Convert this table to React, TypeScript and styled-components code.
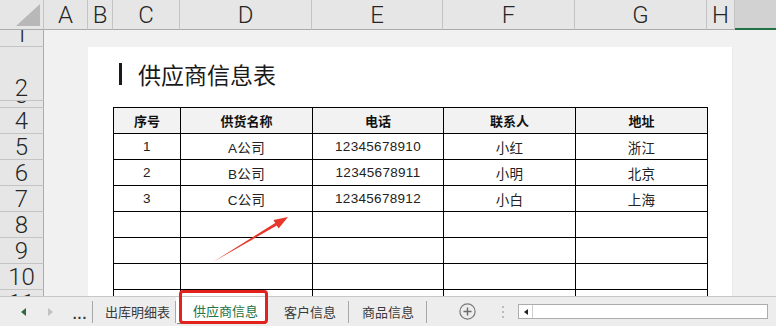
import React from 'react';
import styled, { createGlobalStyle } from 'styled-components';

const GlobalStyle = createGlobalStyle`
  html, body {
    margin: 0;
    padding: 0;
    background: #fff;
  }
  body {
    font-family: "Liberation Sans", "Noto Sans CJK SC", sans-serif;
  }
`;

const columns = [
  { label: 'A', width: 44 },
  { label: 'B', width: 25 },
  { label: 'C', width: 67 },
  { label: 'D', width: 132 },
  { label: 'E', width: 131 },
  { label: 'F', width: 132 },
  { label: 'G', width: 132 },
  { label: 'H', width: 28 },
];

const rows = [
  { label: '1', height: 17 },
  { label: '2', height: 54 },
  { label: '3', height: 7 },
  { label: '4', height: 26 },
  { label: '5', height: 26 },
  { label: '6', height: 26 },
  { label: '7', height: 26 },
  { label: '8', height: 26 },
  { label: '9', height: 26 },
  { label: '10', height: 26 },
  { label: '11', height: 26 },
];

const suppliers = [
  { no: '1', name: 'A公司', phone: '12345678910', contact: '小红', address: '浙江' },
  { no: '2', name: 'B公司', phone: '12345678911', contact: '小明', address: '北京' },
  { no: '3', name: 'C公司', phone: '12345678912', contact: '小白', address: '上海' },
];

const Window = styled.div`
  position: relative;
  width: 776px;
  height: 326px;
  overflow: hidden;
  display: flex;
  flex-direction: column;
  background: #f1f1f1;
`;

const ColumnHeaderRow = styled.div`
  display: flex;
  height: 30px;
  flex-shrink: 0;
`;

const Corner = styled.div`
  position: relative;
  width: 44px;
  box-sizing: border-box;
  background: #e6e6e6;
  border-right: 1px solid #c4c4c4;
  border-bottom: 1px solid #ababab;

  &::after {
    content: '';
    position: absolute;
    right: 3px;
    bottom: 3px;
    width: 24px;
    height: 22px;
    background: #b8b8b8;
    clip-path: polygon(100% 0, 100% 100%, 0 100%);
  }
`;

const HeaderLabel = styled.div<{ $width: number }>`
  width: ${(p) => p.$width}px;
  flex-shrink: 0;
  box-sizing: border-box;
  background: #e6e6e6;
  border-right: 1px solid #c4c4c4;
  border-bottom: 1px solid #ababab;
  font-family: Roboto, "Liberation Sans", sans-serif;
  font-weight: 300;
  font-size: 24px;
  line-height: 30px;
  color: #262626;
  text-align: center;
  overflow: hidden;
`;

const SelectedFiller = styled.div`
  flex: 1;
  background: #d2d2d2;
  border-bottom: 2px solid #217346;
  box-sizing: border-box;
`;

const Body = styled.div`
  flex: 1;
  display: flex;
  min-height: 0;
`;

const RowHeaderColumn = styled.div`
  width: 44px;
  flex-shrink: 0;
  display: flex;
  flex-direction: column;
  overflow: hidden;
`;

const RowLabel = styled.div<{ $height: number }>`
  height: ${(p) => p.$height}px;
  flex-shrink: 0;
  box-sizing: border-box;
  display: flex;
  align-items: flex-end;
  justify-content: center;
  padding-bottom: 1px;
  overflow: hidden;
  background: #e6e6e6;
  border-right: 1px solid #ababab;
  border-bottom: 1px solid #c4c4c4;
  font-family: Roboto, "Liberation Sans", sans-serif;
  font-weight: 300;
  font-size: 24px;
  line-height: 22px;
  color: #262626;
`;

const SheetArea = styled.div`
  flex: 1;
  display: flex;
  padding: 17px 0 0 44px;
  background: #f1f1f1;
  overflow: hidden;
`;

const Page = styled.div`
  width: 645px;
  flex-shrink: 0;
  box-sizing: border-box;
  padding-left: 25px;
  background: #fff;
  border-right: 1px solid #e9e9e9;
  display: flex;
  flex-direction: column;
`;

const Title = styled.div`
  height: 60px;
  flex-shrink: 0;
  display: flex;
  align-items: center;
  padding-bottom: 7px;
  box-sizing: border-box;
  font-family: "Noto Sans CJK SC", sans-serif;
  font-size: 23px;
  color: #1a1a1a;
`;

const TitleBar = styled.span`
  width: 3px;
  height: 22px;
  margin: 0 16px 0 6px;
  background: #1a1a1a;
`;

const Table = styled.table`
  border-collapse: collapse;
  table-layout: fixed;
  width: 594px;
`;

const Cell = styled.td`
  height: 25px;
  padding: 0;
  border: 1px solid #000;
  text-align: center;
  font-family: "Liberation Sans", "Noto Sans CJK SC", sans-serif;
  font-size: 13.5px;
  letter-spacing: 0.3px;
  color: #222;
`;

const HeadCell = styled(Cell).attrs({ as: 'th' })`
  background: #f2f2f2;
  font-weight: bold;
  font-size: 13px;
  letter-spacing: 0;
  color: #111;
`;

const TabBar = styled.div`
  height: 30px;
  flex-shrink: 0;
  box-sizing: border-box;
  display: flex;
  align-items: center;
  background: #ededed;
  border-top: 1px solid #c6c6c6;
  padding-left: 14px;
`;

const NavArrow = styled.div<{ $active?: boolean }>`
  width: 18px;
  height: 18px;
  display: flex;
  align-items: center;
  justify-content: center;

  &::before {
    content: '';
    border-style: solid;
    border-width: 4px 5px 4px 0;
    border-color: transparent ${(p) => (p.$active ? '#2f6b45' : '#c2c2c2')} transparent transparent;
    transform: ${(p) => (p.$active ? 'none' : 'scaleX(-1)')};
  }

  & + & {
    margin-left: 9px;
  }
`;

const Ellipsis = styled.div`
  width: 24px;
  margin-left: 9px;
  text-align: center;
  font-size: 14px;
  font-weight: bold;
  letter-spacing: 1px;
  color: #333;
  padding-top: 4px;
`;

const Divider = styled.div`
  width: 1px;
  height: 22px;
  background: #a8a8a8;
  flex-shrink: 0;
`;

const SheetTab = styled.div<{ $active?: boolean; $pad: string }>`
  height: ${(p) => (p.$active ? '26px' : '22px')};
  align-self: ${(p) => (p.$active ? 'flex-start' : 'center')};
  display: flex;
  align-items: center;
  padding: ${(p) => p.$pad};
  font-family: "Noto Sans CJK SC", sans-serif;
  font-size: 13px;
  color: ${(p) => (p.$active ? '#217346' : '#3a3a3a')};
  background: ${(p) => (p.$active ? '#fff' : 'transparent')};
  box-shadow: ${(p) => (p.$active ? '1px 1px 0 #8a8a8a' : 'none')};
  white-space: nowrap;
`;

const AddButton = styled.svg`
  margin-left: 32px;
  flex-shrink: 0;
`;

const DragDots = styled.div`
  margin-left: 26px;
  display: flex;
  flex-direction: column;
  gap: 3px;

  span {
    width: 2px;
    height: 2px;
    background: #bdbdbd;
  }
`;

const ScrollTrack = styled.div`
  margin-left: 14px;
  width: 250px;
  height: 15px;
  box-sizing: border-box;
  display: flex;
  background: #fff;
  border: 1px solid #acacac;
`;

const ScrollButton = styled.div`
  width: 13px;
  display: flex;
  align-items: center;
  justify-content: center;
  border-right: 1px solid #cfcfcf;

  &::before {
    content: '';
    border-style: solid;
    border-width: 3.5px 4px 3.5px 0;
    border-color: transparent #222 transparent transparent;
  }
`;

const Highlight = styled.div`
  position: absolute;
  left: 179px;
  top: 290px;
  width: 89px;
  height: 34px;
  box-sizing: border-box;
  border: 3px solid #e2231d;
  border-radius: 4px;
  pointer-events: none;
`;

const Pointer = styled.svg`
  position: absolute;
  left: 0;
  top: 0;
  pointer-events: none;
`;

const App: React.FC = () => {
  const emptyRows = [0, 1, 2, 3];
  return (
    <Window>
      <GlobalStyle />
      <ColumnHeaderRow>
        <Corner />
        {columns.map((c) => (
          <HeaderLabel key={c.label} $width={c.width}>
            {c.label}
          </HeaderLabel>
        ))}
        <SelectedFiller />
      </ColumnHeaderRow>

      <Body>
        <RowHeaderColumn>
          {rows.map((r) => (
            <RowLabel key={r.label} $height={r.height}>
              {r.label}
            </RowLabel>
          ))}
        </RowHeaderColumn>

        <SheetArea>
          <Page>
            <Title>
              <TitleBar />
              供应商信息表
            </Title>
            <Table>
              <colgroup>
                <col style={{ width: 67 }} />
                <col style={{ width: 132 }} />
                <col style={{ width: 131 }} />
                <col style={{ width: 132 }} />
                <col style={{ width: 132 }} />
              </colgroup>
              <thead>
                <tr>
                  <HeadCell>序号</HeadCell>
                  <HeadCell>供货名称</HeadCell>
                  <HeadCell>电话</HeadCell>
                  <HeadCell>联系人</HeadCell>
                  <HeadCell>地址</HeadCell>
                </tr>
              </thead>
              <tbody>
                {suppliers.map((s) => (
                  <tr key={s.no}>
                    <Cell>{s.no}</Cell>
                    <Cell>{s.name}</Cell>
                    <Cell>{s.phone}</Cell>
                    <Cell>{s.contact}</Cell>
                    <Cell>{s.address}</Cell>
                  </tr>
                ))}
                {emptyRows.map((i) => (
                  <tr key={`empty-${i}`}>
                    <Cell />
                    <Cell />
                    <Cell />
                    <Cell />
                    <Cell />
                  </tr>
                ))}
              </tbody>
            </Table>
          </Page>
        </SheetArea>
      </Body>

      <TabBar>
        <NavArrow $active />
        <NavArrow />
        <Ellipsis>...</Ellipsis>
        <Divider />
        <SheetTab $pad="0 5px 0 12px">出库明细表</SheetTab>
        <Divider />
        <SheetTab $active $pad="0 7px 0 17px">供应商信息</SheetTab>
        <SheetTab $pad="0 12px 0 19px">客户信息</SheetTab>
        <Divider />
        <SheetTab $pad="0 12px 0 13px">商品信息</SheetTab>
        <Divider />
        <AddButton width="17" height="17" viewBox="0 0 17 17">
          <circle cx="8.5" cy="8.5" r="7.6" fill="none" stroke="#7a7a7a" strokeWidth="1.2" />
          <path d="M8.5 4.5v8M4.5 8.5h8" stroke="#6a6a6a" strokeWidth="1.4" />
        </AddButton>
        <DragDots>
          <span />
          <span />
          <span />
        </DragDots>
        <ScrollTrack>
          <ScrollButton />
        </ScrollTrack>
      </TabBar>

      <Highlight />
      <Pointer width="776" height="326" viewBox="0 0 776 326">
        <polygon
          points="213,262 275.2,222.9 273.4,219.9 288,217 278.6,228.5 276.8,225.5"
          fill="#e8362c"
        />
      </Pointer>
    </Window>
  );
};

export default App;
